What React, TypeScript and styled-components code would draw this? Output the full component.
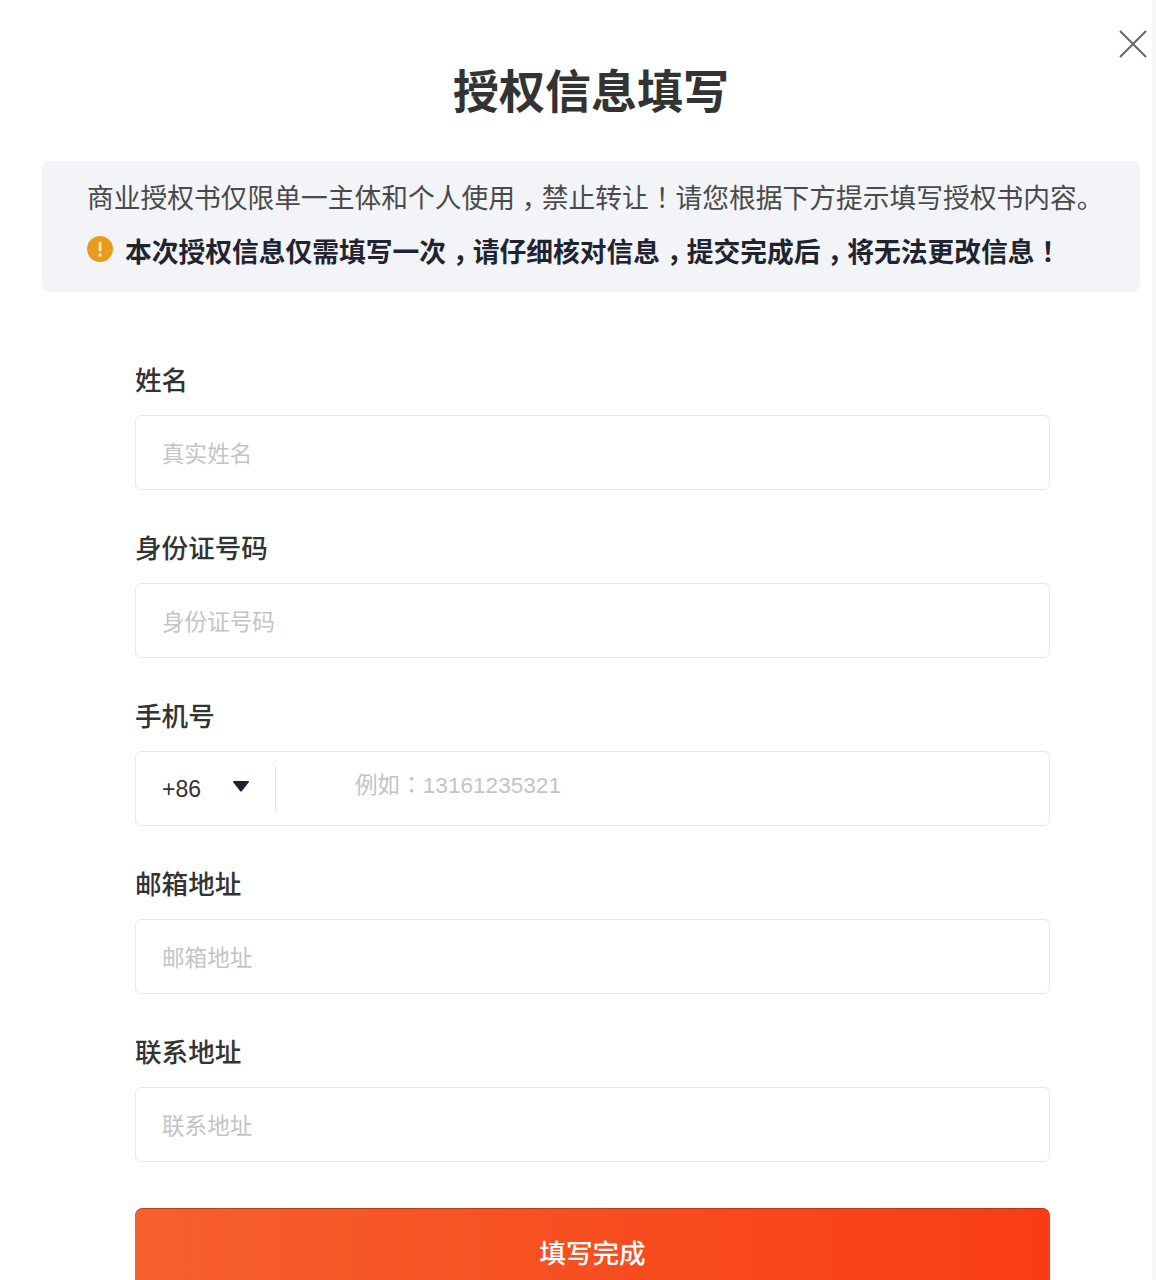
import React from "react";
import styled, { createGlobalStyle } from "styled-components";

const GlobalStyle = createGlobalStyle`
  html, body {
    margin: 0;
    padding: 0;
    background: #fff;
  }
  * {
    box-sizing: border-box;
  }
`;

const Modal = styled.div`
  position: relative;
  width: 1156px;
  height: 1280px;
  overflow: hidden;
  padding: 54px 12px 0 42px;
  background: #fff;
  border-right: 4px solid #f6f6f6;
  font-family: "Noto Sans CJK SC", "Liberation Sans", sans-serif;
  color: #333;
`;

const CloseButton = styled.button`
  position: absolute;
  top: 29px;
  right: 4px;
  width: 30px;
  height: 30px;
  padding: 0;
  border: 0;
  background: none;
  color: #666;
`;

const Title = styled.h1`
  margin: 0 0 39px;
  height: 68px;
  line-height: 68px;
  text-align: center;
  font-size: 46px;
  font-weight: 700;
  color: #333;
`;

const Notice = styled.div`
  height: 131px;
  padding: 17px 0 0 45px;
  border-radius: 8px;
  background: #f2f4f8;
`;

const NoticeLine = styled.p`
  margin: 0 0 16px;
  height: 38px;
  line-height: 38px;
  white-space: nowrap;
  font-size: 26.75px;
  color: #4a4a4a;
`;

const WarningLine = styled(NoticeLine)`
  display: flex;
  align-items: center;
  gap: 12px;
  font-weight: 700;
  color: #1f2430;
`;

// full-width punctuation sits in the middle of its cell in the reference
const Punct = styled.span`
  display: inline-block;
  width: 1em;
  text-align: center;
  font-feature-settings: "halt";
`;

const WarningIcon = styled.svg`
  width: 26px;
  height: 26px;
  flex: none;
  margin-top: -4px;
`;

const Form = styled.form`
  width: 915px;
  margin: 68px 0 0 93px;
`;

const Field = styled.div`
  margin-bottom: 38px;
`;

const Label = styled.label`
  display: block;
  height: 38px;
  margin-bottom: 17px;
  line-height: 38px;
  font-size: 26.6px;
  font-weight: 500;
  color: #333;
`;

const InputBox = styled.div`
  display: flex;
  align-items: center;
  height: 75px;
  padding: 0 26px;
  border: 1px solid #e6e8ec;
  border-radius: 6px;
  background: #fff;
`;

const TextInput = styled.input`
  flex: 1;
  min-width: 0;
  height: 100%;
  padding: 0;
  border: 0;
  outline: 0;
  background: transparent;
  font-family: inherit;
  font-size: 22.6px;
  color: #333;
  &::placeholder {
    color: #c4c4c4;
    opacity: 1;
  }
`;

const PhoneInput = styled(TextInput)`
  margin: -6px 0 0 79px;
  font-family: "Liberation Sans", "Noto Sans CJK TC", sans-serif;
`;

const CountryCode = styled.span`
  width: 71px;
  margin-top: 2px;
  font-family: "Liberation Sans", sans-serif;
  font-size: 23px;
  color: #333;
`;

const Caret = styled.svg`
  width: 16px;
  height: 11px;
  flex: none;
  margin-top: -5px;
`;

const Divider = styled.span`
  width: 1px;
  height: 45px;
  flex: none;
  margin-left: 26px;
  background: #e4e4e4;
`;

const SubmitButton = styled.button`
  display: block;
  width: 100%;
  height: 86px;
  margin-top: 46px;
  padding: 0;
  border: 0;
  border-radius: 8px;
  background: linear-gradient(90deg, #f5602c 0%, #fa3c14 100%);
  box-shadow: inset 0 1px 0 rgba(120, 50, 30, 0.55);
  font-family: inherit;
  font-size: 26.6px;
  font-weight: 500;
  color: #fff;
`;

const COMMA = "\uFF0C";
const BANG = "\uFF01";

const fields = [
  { label: "姓名", placeholder: "真实姓名" },
  { label: "身份证号码", placeholder: "身份证号码" },
  { label: "手机号", placeholder: "例如\uFF1A13161235321", phone: true },
  { label: "邮箱地址", placeholder: "邮箱地址" },
  { label: "联系地址", placeholder: "联系地址" },
];

const App: React.FC = () => {
  return (
    <>
      <GlobalStyle />
      <Modal>
        <CloseButton type="button" aria-label="关闭">
          <svg width="30" height="30" viewBox="0 0 30 30" fill="none">
            <path d="M2 2L28 28M28 2L2 28" stroke="currentColor" strokeWidth="2" />
          </svg>
        </CloseButton>
        <Title>授权信息填写</Title>
        <Notice>
          <NoticeLine>
            商业授权书仅限单一主体和个人使用<Punct>{COMMA}</Punct>禁止转让<Punct>{BANG}</Punct>
            请您根据下方提示填写授权书内容。
          </NoticeLine>
          <WarningLine>
            <WarningIcon viewBox="0 0 26 26">
              <circle cx="13" cy="13" r="13" fill="#ea9a1c" />
              <rect x="11.5" y="5.5" width="3" height="10" rx="1.5" fill="#fbe6c0" />
              <circle cx="13" cy="19" r="1.8" fill="#fbe6c0" />
            </WarningIcon>
            <span>
              本次授权信息仅需填写一次<Punct>{COMMA}</Punct>请仔细核对信息<Punct>{COMMA}</Punct>
              提交完成后<Punct>{COMMA}</Punct>将无法更改信息<Punct>{BANG}</Punct>
            </span>
          </WarningLine>
        </Notice>
        <Form>
          {fields.map((field) => (
            <Field key={field.label}>
              <Label>{field.label}</Label>
              <InputBox>
                {field.phone ? (
                  <>
                    <CountryCode>+86</CountryCode>
                    <Caret viewBox="0 0 16 11">
                      <path d="M0 1Q0 0 1 0H15Q16 0 16 1L9 10Q8 11 7 10Z" fill="#1c2430" />
                    </Caret>
                    <Divider />
                    <PhoneInput placeholder={field.placeholder} />
                  </>
                ) : (
                  <TextInput placeholder={field.placeholder} />
                )}
              </InputBox>
            </Field>
          ))}
          <SubmitButton type="button">填写完成</SubmitButton>
        </Form>
      </Modal>
    </>
  );
};

export default App;
